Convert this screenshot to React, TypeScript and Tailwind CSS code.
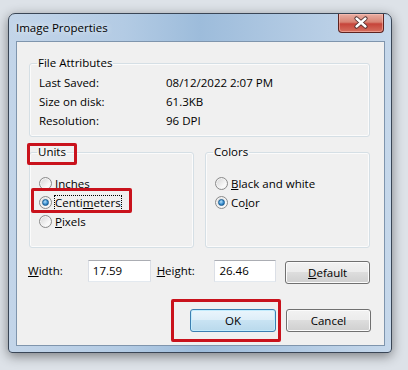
import React from 'react';

const Radio = ({ checked }: { checked?: boolean }) => (
  <span className="flex h-[13px] w-[13px] shrink-0 items-center justify-center rounded-full border border-[#8a8a8a] bg-[linear-gradient(135deg,#d4d4d4,#f9f9f9_70%)] shadow-[inset_0_0_0_1px_#f4f4f4]">
    {checked && (
      <span className="h-[7px] w-[7px] rounded-full border border-[#185c92] bg-[radial-gradient(circle_at_40%_35%,#b5e0fa,#3a8fd0_55%,#14508a)]" />
    )}
  </span>
);

const RadioRow = ({ checked, children }: { checked?: boolean; children: React.ReactNode }) => (
  <div className="flex h-[19px] items-center gap-[3px]">
    <Radio checked={checked} />
    <span className="leading-[19px]">{children}</span>
  </div>
);

const GroupBox = ({ title, className, children }: { title: string; className?: string; children: React.ReactNode }) => (
  <fieldset className="rounded-[3px] border border-[#d5dfe5] p-0 shadow-[inset_0_0_0_1px_#fbfbfb]">
    <legend className="ml-[7px] px-[1px] leading-[16px]">{title}</legend>
    <div className={className}>{children}</div>
  </fieldset>
);

const btn =
  'flex h-[23px] w-[85px] items-center justify-center rounded-[3px] border border-[#707070] bg-[linear-gradient(to_bottom,#f2f2f2_0%,#ebebeb_50%,#dddddd_50%,#cfcfcf_100%)] shadow-[inset_0_0_0_1px_#fbfbfb] leading-none';

const inputCls =
  'h-[22px] border border-t-[#abadb3] border-x-[#dbdfe6] border-b-[#e3e9ef] bg-white pl-[4px] leading-[20px]';

export default function App() {
  const attrs = [
    ['Last Saved:', '08/12/2022 2:07 PM'],
    ['Size on disk:', '61.3KB'],
    ['Resolution:', '96 DPI'],
  ];

  return (
    <div className="relative h-[370px] w-[408px] overflow-hidden bg-[#dde2e8] pl-[8px] pt-[13px] font-['Open_Sans',sans-serif] text-[11.5px] text-black">
      {/* window frame */}
      <div className="flex h-[340px] w-[384px] flex-col rounded-t-[7px] rounded-b-[4px] border border-[#3a4656] bg-[linear-gradient(to_right,#c3d5e9,#b3cbe4_30%,#9dbcdb_50%,#b2cae3_75%,#c6d8eb)] shadow-[0_3px_12px_rgba(0,0,0,0.45)]">
        <div className="flex h-[27px] items-start justify-between">
          <span className="ml-[7px] mt-[6px] leading-[16px] [text-shadow:0_0_6px_#ffffff]">Image Properties</span>
          <div className="mr-[7px] h-[19px] w-[46px] rounded-b-[4px] border border-t-0 border-[#5d2320] bg-[linear-gradient(to_bottom,#e9aea3_0%,#d88373_45%,#c6443a_55%,#d6705f_100%)] shadow-[inset_0_0_0_1px_rgba(255,200,190,0.5)]">
            <svg width="44" height="18" viewBox="0 0 44 18">
              <path d="M17.5 4.5 L26.5 12.5 M26.5 4.5 L17.5 12.5" stroke="#4a2a2a" strokeWidth="4.2" strokeLinecap="round" />
              <path d="M17.5 4.5 L26.5 12.5 M26.5 4.5 L17.5 12.5" stroke="#ffffff" strokeWidth="2.4" strokeLinecap="round" />
            </svg>
          </div>
        </div>

        {/* client area */}
        <div className="mb-[6px] ml-[7px] mr-[6px] flex flex-1 flex-col border border-[#7f95ad] bg-[#f0f0f0] pl-[12px] pr-[14px] pt-[13px]">
          <GroupBox title="File Attributes" className="pb-[6px] pl-[9px] pt-[2px]">
            {attrs.map(([k, v]) => (
              <div key={k} className="flex h-[19px] items-center leading-[19px]">
                <span className="w-[127px]">{k}</span>
                <span>{v}</span>
              </div>
            ))}
          </GroupBox>

          <div className="mt-[7px] grid grid-cols-2 gap-[11px]">
            <GroupBox title="Units" className="pb-[16px] pl-[9px] pt-[14px]">
              <RadioRow>Inches</RadioRow>
              <RadioRow checked>
                <span className="inline-block leading-[14px] outline outline-1 outline-dotted outline-black">
                  Centi<span className="underline">m</span>eters
                </span>
              </RadioRow>
              <RadioRow>
                <span className="underline">P</span>ixels
              </RadioRow>
            </GroupBox>
            <GroupBox title="Colors" className="pb-[16px] pl-[9px] pt-[14px]">
              <RadioRow>
                <span className="underline">B</span>lack and white
              </RadioRow>
              <RadioRow checked>
                Co<span className="underline">l</span>or
              </RadioRow>
            </GroupBox>
          </div>

          <div className="-ml-[1px] mt-[12px] flex items-start">
            <span className="w-[60px] leading-[22px]">
              <span className="underline">W</span>idth:
            </span>
            <div className={`${inputCls} w-[63px]`}>17.59</div>
            <span className="ml-[6px] w-[58px] leading-[22px]">
              <span className="underline">H</span>eight:
            </span>
            <div className={`${inputCls} w-[62px]`}>26.46</div>
            <button className={`${btn} ml-[9px] mt-[1px]`}>
              <span className="underline">D</span>efault
            </button>
          </div>

          <div className="-mr-[1px] mt-[25px] flex justify-end gap-[10px]">
            <button className="flex h-[23px] w-[86px] items-center justify-center rounded-[3px] border border-[#3c7fb1] bg-[linear-gradient(to_bottom,#eaf5fc_0%,#dcedf8_50%,#c8e3f3_50%,#b9d9ec_100%)] shadow-[inset_0_0_0_1px_#c2ecfd] leading-none">
              OK
            </button>
            <button className={btn}>Cancel</button>
          </div>
        </div>
      </div>

      {/* red annotation boxes */}
      <div className="absolute left-[27px] top-[143px] h-[22px] w-[50px] rounded-[2px] border-[3px] border-[#c9121c]" />
      <div className="absolute left-[31px] top-[188px] h-[25px] w-[101px] rounded-[2px] border-[3px] border-[#c9121c]" />
      <div className="absolute left-[171px] top-[299px] h-[43px] w-[110px] rounded-[2px] border-[3px] border-[#c9121c]" />
    </div>
  );
}
